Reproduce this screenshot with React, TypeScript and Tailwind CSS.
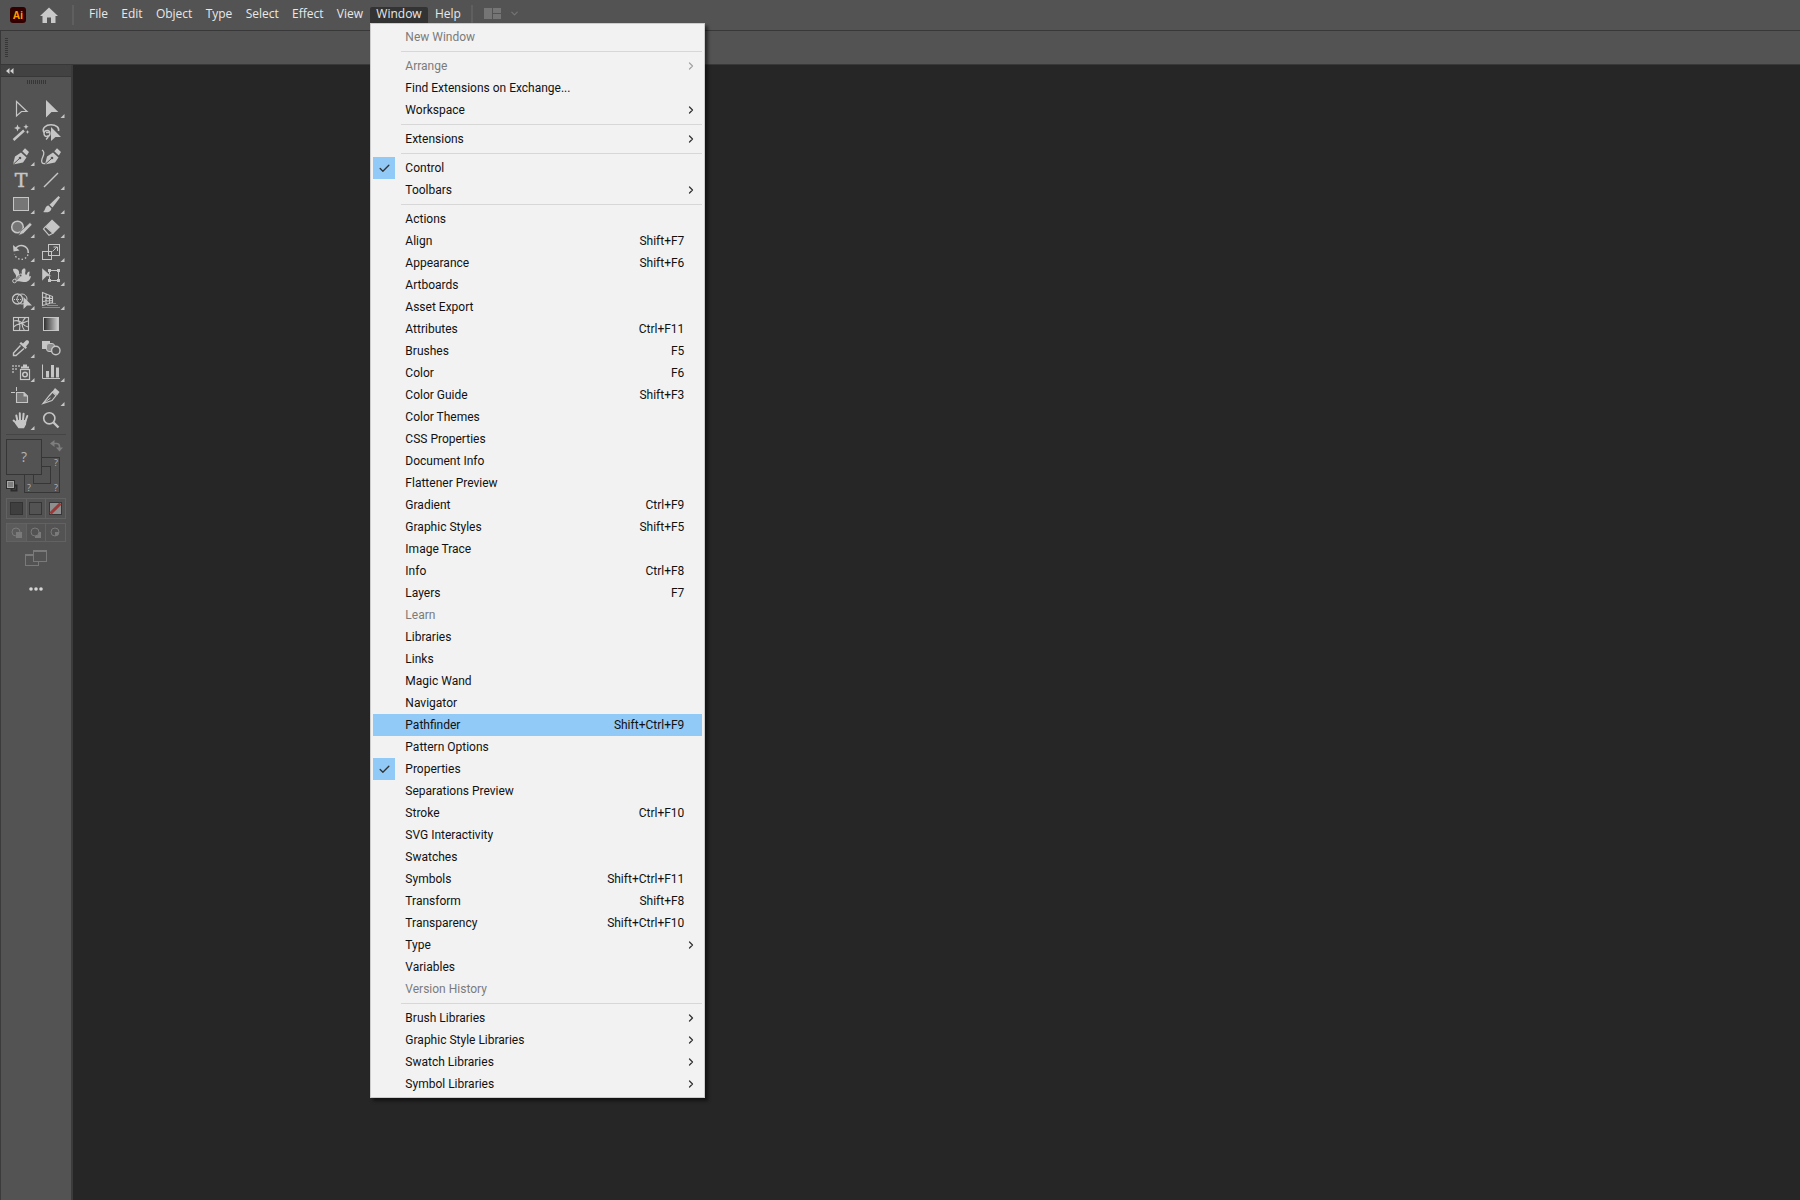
import { ReactNode, useState } from "react";
import { Check, ChevronDown, ChevronRight } from "lucide-react";
import clsx from "clsx";

interface MenuEntry {
  label: string;
  shortcut?: string;
  submenu?: boolean;
  disabled?: boolean;
  checked?: boolean;
}

interface Tool {
  name: string;
  icon: ReactNode;
  flyout?: boolean;
}

const MENUS = ["File", "Edit", "Object", "Type", "Select", "Effect", "View", "Window", "Help"];

const WINDOW_MENU: MenuEntry[][] = [
  [{ label: "New Window", disabled: true }],
  [
    { label: "Arrange", submenu: true, disabled: true },
    { label: "Find Extensions on Exchange..." },
    { label: "Workspace", submenu: true },
  ],
  [{ label: "Extensions", submenu: true }],
  [
    { label: "Control", checked: true },
    { label: "Toolbars", submenu: true },
  ],
  [
    { label: "Actions" },
    { label: "Align", shortcut: "Shift+F7" },
    { label: "Appearance", shortcut: "Shift+F6" },
    { label: "Artboards" },
    { label: "Asset Export" },
    { label: "Attributes", shortcut: "Ctrl+F11" },
    { label: "Brushes", shortcut: "F5" },
    { label: "Color", shortcut: "F6" },
    { label: "Color Guide", shortcut: "Shift+F3" },
    { label: "Color Themes" },
    { label: "CSS Properties" },
    { label: "Document Info" },
    { label: "Flattener Preview" },
    { label: "Gradient", shortcut: "Ctrl+F9" },
    { label: "Graphic Styles", shortcut: "Shift+F5" },
    { label: "Image Trace" },
    { label: "Info", shortcut: "Ctrl+F8" },
    { label: "Layers", shortcut: "F7" },
    { label: "Learn", disabled: true },
    { label: "Libraries" },
    { label: "Links" },
    { label: "Magic Wand" },
    { label: "Navigator" },
    { label: "Pathfinder", shortcut: "Shift+Ctrl+F9" },
    { label: "Pattern Options" },
    { label: "Properties", checked: true },
    { label: "Separations Preview" },
    { label: "Stroke", shortcut: "Ctrl+F10" },
    { label: "SVG Interactivity" },
    { label: "Swatches" },
    { label: "Symbols", shortcut: "Shift+Ctrl+F11" },
    { label: "Transform", shortcut: "Shift+F8" },
    { label: "Transparency", shortcut: "Shift+Ctrl+F10" },
    { label: "Type", submenu: true },
    { label: "Variables" },
    { label: "Version History", disabled: true },
  ],
  [
    { label: "Brush Libraries", submenu: true },
    { label: "Graphic Style Libraries", submenu: true },
    { label: "Swatch Libraries", submenu: true },
    { label: "Symbol Libraries", submenu: true },
  ],
];

const INK = "#c6c6c6";
const PANEL = "#535353";

const TOOLS: Tool[] = [
  {
    name: "Selection",
    icon: <path d="M10.5 5.5 21 15.5H15.5L10.5 20Z" fill="none" stroke={INK} strokeWidth="1.2" />,
  },
  { name: "Direct Selection", flyout: true, icon: <path d="M10 4 22.3 16H15.5L10 21.5Z" /> },
  {
    name: "Magic Wand",
    icon: (
      <>
        <path d="M7.5 20 18 10.5" stroke={INK} strokeWidth="2.4" />
        <path d="M11.5 4.5 12.5 7 15 8 12.5 9 11.5 11.5 10.5 9 8 8 10.5 7ZM20 4l.8 1.9 1.9.8-1.9.8-.8 2-.8-2-1.9-.8 1.9-.8ZM21.5 10l.6 1.4 1.4.6-1.4.6-.6 1.4-.6-1.4-1.4-.6 1.4-.6Z" />
      </>
    ),
  },
  {
    name: "Lasso",
    icon: (
      <>
        <path d="M8 12.5C5.5 8 10 4.8 15 4.8s8.5 2.5 7.5 6.2" fill="none" stroke={INK} strokeWidth="1.6" />
        <circle cx="11" cy="13.5" r="3" fill="none" stroke={INK} strokeWidth="1.4" />
        <path d="M10 12.5h4M12 15c.5 2-.5 3.5-2 4.5" fill="none" stroke={INK} strokeWidth="1.3" />
        <path d="M15 7 25 17H19.5L15 21Z" />
      </>
    ),
  },
  {
    name: "Pen",
    flyout: true,
    icon: (
      <>
        <path d="M7 20.5 9 12.5 15 8.5 20.5 13.5 17 18.5Z" />
        <path d="M16.3 7.2 19 4.2 23 8 20.8 11.5Z" />
        <path d="M7 20.5 13.5 14.5" stroke={PANEL} />
        <circle cx="14" cy="14" r="1.3" fill={PANEL} />
      </>
    ),
  },
  {
    name: "Curvature",
    icon: (
      <>
        <path d="M9 20.5 11 12.5 17 8.5 22.5 13.5 19 18.5Z" />
        <path d="M18.3 7.2 21 4.2 25 8 22.8 11.5Z" />
        <path d="M9 20.5 15.5 14.5" stroke={PANEL} />
        <circle cx="16" cy="14" r="1.3" fill={PANEL} />
        <path d="M6 6c4 2 1 6 0 9s0 5 3 4.5" fill="none" stroke={INK} strokeWidth="1.3" />
      </>
    ),
  },
  {
    name: "Type",
    flyout: true,
    icon: (
      <text x="15" y="19" fontSize="19" textAnchor="middle" fontFamily="'DejaVu Serif', serif" stroke={INK} strokeWidth="0.5">
        T
      </text>
    ),
  },
  { name: "Line Segment", flyout: true, icon: <path d="M8 19 22 5" stroke={INK} strokeWidth="1.5" /> },
  {
    name: "Rectangle",
    flyout: true,
    icon: <rect x="7.5" y="5.5" width="15" height="13" fill="#767676" stroke={INK} />,
  },
  {
    name: "Paintbrush",
    flyout: true,
    icon: (
      <>
        <path d="M22.5 4 24 5.5 16.5 15.5 13.5 12.7Z" />
        <path d="M12.5 13.5 15.5 16.5C15 20 11 21 7 20c2.5-1 1.8-6.5 5.5-6.5Z" />
      </>
    ),
  },
  {
    name: "Shaper",
    flyout: true,
    icon: (
      <>
        <circle cx="11.5" cy="11" r="5.8" fill="#767676" stroke={INK} strokeWidth="1.5" />
        <path d="M24 6.5 26 8.8 17.5 17.5 12.5 19.5 14.5 15.5Z" stroke={PANEL} strokeWidth="0.6" />
      </>
    ),
  },
  {
    name: "Eraser",
    flyout: true,
    icon: (
      <>
        <path d="M16 3.5 24 11 17.5 17.5 9.5 10Z" />
        <path d="M9.5 10.5 7.5 13 13 19.3 17 17.2Z" fill="none" stroke={INK} strokeWidth="1.2" />
      </>
    ),
  },
  {
    name: "Rotate",
    flyout: true,
    icon: (
      <>
        <path d="M9 9.5A7 7 0 0 1 22.3 13" fill="none" stroke={INK} strokeWidth="1.7" />
        <path d="M22 14.5A7 7 0 0 1 8.5 14" fill="none" stroke={INK} strokeWidth="1.3" strokeDasharray="1.5 2" />
        <path d="M7 5 7.5 11.5 13.5 10.5Z" />
      </>
    ),
  },
  {
    name: "Scale",
    flyout: true,
    icon: (
      <g fill="none" stroke={INK}>
        <rect x="12.5" y="4.5" width="11" height="11" />
        <rect x="6.5" y="11.5" width="9" height="8" />
        <path d="M16.5 11.5 21 7M17.5 7H21.5V11" />
      </g>
    ),
  },
  {
    name: "Width",
    flyout: true,
    icon: (
      <>
        <path d="M7 5c4-1 7 1.5 6 5l3-.5c-1-3 .5-5.500 3-5 1.500 3-1 4.500 1 6.500 1.500-.5 1-3.500 3.500-3.500.5 2-1 3.500 0 5l1.500-.5c-.5 4-3.500 6.500-7.500 6-3.500-.4-5-1-7.500-.5l-2-2c2.500-1.500 2.500-3.500 1.500-5S7 7.500 7 5Z" />
        <path d="M8.5 17 15 10.5" stroke={PANEL} strokeWidth="2" />
        <path d="M8.5 17 15 10.5" stroke={INK} />
        <circle cx="8.5" cy="17" r="1.8" fill={PANEL} stroke={INK} />
        <circle cx="14.5" cy="11.5" r="1.3" fill={PANEL} stroke={INK} strokeWidth="0.8" />
      </>
    ),
  },
  {
    name: "Free Transform",
    flyout: true,
    icon: (
      <>
        <rect x="13.5" y="6.5" width="9" height="10" fill="none" stroke={INK} />
        <path d="M12 5h3v3h-3ZM21 5h3v3h-3ZM12 15h3v3h-3ZM21 15h3v3h-3Z" />
        <path d="M6 4 15.5 12.3H10.5L6 17Z" stroke={PANEL} strokeWidth="0.4" />
      </>
    ),
  },
  {
    name: "Shape Builder",
    flyout: true,
    icon: (
      <>
        <circle cx="11.5" cy="11" r="5" fill="none" stroke={INK} strokeWidth="1.3" />
        <circle cx="16" cy="11" r="5" fill="none" stroke={INK} />
        <path d="M8 11.5h9" stroke={INK} strokeDasharray="1 1" />
        <path d="M17.5 9 26 17.5H21L17.5 21Z" />
      </>
    ),
  },
  {
    name: "Perspective Grid",
    flyout: true,
    icon: (
      <>
        <path
          d="M6.5 4.5 16.5 8.5V14.5L6.5 17.5ZM10 6v10.5M13.5 7.5v8M6.5 9l10 1.5M6.5 13.5l10-1"
          fill="none"
          stroke={INK}
          strokeWidth="1.1"
        />
        <path d="M14 15.5h6M11 17.5h11M6 19.5h18" stroke="#8c8c8c" />
      </>
    ),
  },
  {
    name: "Mesh",
    icon: (
      <g fill="none" stroke={INK} strokeWidth="1.1">
        <rect x="7.5" y="5.5" width="15" height="13" />
        <path d="M7.5 9c4-1 7 0 9.500 3s4 3 5.500 2.500M7.5 15c3-3 6-3 9-4s4-2 6-2M12.5 5.5c-1 4 3 6 1 13M19.5 5.5c-4 4-4 9-1 13" />
      </g>
    ),
  },
  {
    name: "Gradient",
    icon: (
      <>
        <defs>
          <linearGradient id="toolGradient">
            <stop offset="0" stopColor="#2b2b2b" />
            <stop offset="1" stopColor="#d4d4d4" />
          </linearGradient>
        </defs>
        <rect x="7.5" y="5.5" width="15" height="13" fill="url(#toolGradient)" stroke={INK} />
      </>
    ),
  },
  {
    name: "Eyedropper",
    flyout: true,
    icon: (
      <>
        <path d="M17 7.5 20 4.5c2-1 4 1 2.5 3L20 10.5l1 1-1.5 1.5-6-5.5 1.5-1.5Z" />
        <path d="M14.5 9.5 7.5 17v2.5H10L18 12.5" fill="none" stroke={INK} strokeWidth="1.4" />
      </>
    ),
  },
  {
    name: "Blend",
    icon: (
      <>
        <rect x="6" y="5" width="8" height="8" />
        <rect x="10.5" y="7.5" width="8" height="8" rx="2.5" fill="#8c8c8c" stroke={INK} />
        <circle cx="19.8" cy="14.5" r="4.2" fill={PANEL} stroke={INK} strokeWidth="1.4" />
      </>
    ),
  },
  {
    name: "Symbol Sprayer",
    flyout: true,
    icon: (
      <>
        <path d="M6 5h2v2H6ZM9 5h2v2H9ZM12 5h2v2h-2ZM6 8h2v2H6ZM9 8h2v2H9ZM6 11h2v2H6Z" fill="#9a9a9a" />
        <path d="M17 4.5h4v2h2v2h-8v-2h2Z" />
        <rect x="14.5" y="9.5" width="9" height="10" fill="none" stroke={INK} strokeWidth="1.2" />
        <circle cx="19" cy="14.5" r="2.3" fill="none" stroke={INK} strokeWidth="1.5" />
      </>
    ),
  },
  {
    name: "Column Graph",
    flyout: true,
    icon: (
      <>
        <path d="M6.5 4.5V18.5H24" fill="none" stroke={INK} />
        <path d="M10 11h3v6.5h-3ZM15 5h3v12.5h-3ZM20 7.5h3v10h-3Z" />
      </>
    ),
  },
  {
    name: "Artboard",
    icon: (
      <>
        <path d="M10.5 8.5H18L21.5 12V18.5H10.5Z" fill="#767676" stroke={INK} strokeWidth="1.1" />
        <path d="M5 8.5h4M10.5 3v4" stroke={INK} />
        <path d="M17.5 8.5 21.5 12.5H17.5Z" />
      </>
    ),
  },
  {
    name: "Slice",
    flyout: true,
    icon: (
      <>
        <path d="M19 4 23.5 8 21 11.5 16.5 7.5Z" />
        <path d="M16.5 8 20 11.5 16 16.5 7 19.5 13 12Z" fill="none" stroke={INK} strokeWidth="1.2" />
        <path d="M7 19.5 14.5 14" stroke={INK} />
      </>
    ),
  },
  {
    name: "Hand",
    flyout: true,
    icon: (
      <>
        <path
          d="M11.5 13 10.3 7.5M14 12 13.8 5.3M17 12 17.6 5.7M19.5 13 21.3 8M11.5 16 7.6 12.6"
          fill="none"
          stroke={INK}
          strokeWidth="2"
          strokeLinecap="round"
        />
        <path d="M10.5 12H20.5L20 16.5 18 20.2H12.5L9 15.5Z" />
      </>
    ),
  },
  {
    name: "Zoom",
    icon: (
      <>
        <circle cx="13.3" cy="10.3" r="5.6" fill="none" stroke={INK} strokeWidth="1.6" />
        <path d="M17.5 14.5 22.5 19.5" stroke={INK} strokeWidth="2.4" />
      </>
    ),
  },
];

function ToolButton({ tool }: { tool: Tool }) {
  return (
    <button type="button" aria-label={`${tool.name} Tool`} className="h-6 w-[30px] hover:bg-[#444444]">
      <svg viewBox="0 0 30 24" className="h-6 w-[30px]" fill={INK}>
        {tool.icon}
        {tool.flyout && <path d="M28.5 18V22H24.5Z" />}
      </svg>
    </button>
  );
}

function FillAndStroke() {
  return (
    <button type="button" aria-label="Fill and stroke" className="mt-1 h-[55px] w-[60px]">
      <svg viewBox="0 0 60 55" className="h-[55px] w-[60px]" fill={PANEL} stroke="#363636" fontFamily="'Open Sans', sans-serif">
        <rect x="18.5" y="18.5" width="35" height="35" />
        <rect x="27.5" y="27.5" width="17" height="17" />
        <rect x="0.5" y="0.5" width="35" height="35" />
        <g fill="#b4b4b4" stroke="none" textAnchor="middle" fontSize="9">
          <text x="18" y="23" fontSize="14">?</text>
          <text x="50" y="27">?</text>
          <text x="23" y="52">?</text>
          <text x="50" y="52">?</text>
        </g>
        <path d="M47 4.5h3.5q3 0 3 3V9" fill="none" stroke="#7e7e7e" strokeWidth="1.6" />
        <path d="M44 4.5 48.5 1v7ZM53.5 12.5 50 8.5h7Z" fill="#7e7e7e" stroke="none" />
        <rect x="5.5" y="46.5" width="5" height="5" fill="none" stroke="#2c2c2c" strokeWidth="2" />
        <rect x="1.5" y="42.5" width="6" height="6" fill="#7e7e7e" stroke="#a8a8a8" />
        <rect x="0.5" y="41.5" width="8" height="8" fill="none" stroke="#2c2c2c" />
      </svg>
    </button>
  );
}

function PaintModes() {
  return (
    <div className="mt-1 grid h-[21px] w-[60px] grid-cols-3 border border-[#626262]">
      <button type="button" aria-label="Color" className="flex items-center justify-center">
        <span className="size-[13px] border border-[#333333] bg-[#3f3f3f]" />
      </button>
      <button type="button" aria-label="Gradient" className="flex items-center justify-center border-x border-[#626262]">
        <span className="size-[13px] border border-[#363636]" />
      </button>
      <button type="button" aria-label="None" className="flex items-center justify-center">
        <svg viewBox="0 0 13 13" className="size-[13px]">
          <rect x="0.5" y="0.5" width="12" height="12" fill="#8f8f8f" stroke="#363636" />
          <path d="M1.5 11.5 11.5 1.5" stroke="#963a3a" strokeWidth="3" />
        </svg>
      </button>
    </div>
  );
}

function DrawingModes() {
  return (
    <div className="mt-1 grid h-[19px] w-[60px] grid-cols-3 border border-[#626262]">
      <button type="button" aria-label="Draw Normal" className="flex items-center justify-center bg-[#5b5b5b]">
        <svg viewBox="0 0 12 12" className="size-3" fill="none" stroke="#7a7a7a">
          <circle cx="5" cy="5" r="4" />
          <rect x="5" y="5" width="6" height="6" fill="#7a7a7a" stroke="none" />
        </svg>
      </button>
      <button type="button" aria-label="Draw Behind" className="flex items-center justify-center border-x border-[#626262]">
        <svg viewBox="0 0 12 12" className="size-3" stroke="#7a7a7a">
          <rect x="5" y="5" width="6" height="6" fill="#7a7a7a" stroke="none" />
          <circle cx="5" cy="5" r="4" fill={PANEL} />
        </svg>
      </button>
      <button type="button" aria-label="Draw Inside" className="flex items-center justify-center">
        <svg viewBox="0 0 12 12" className="size-3" fill="none" stroke="#7a7a7a">
          <circle cx="6" cy="5" r="4" />
          <path d="M6 5h4q0 4-4 4Z" fill="#7a7a7a" stroke="none" />
        </svg>
      </button>
    </div>
  );
}

function Toolbar() {
  return (
    <aside className="flex w-[73px] shrink-0 flex-col border-r-2 border-l border-[#3b3b3b] bg-[#535353]">
      <div className="flex h-3 items-center border-b border-[#383838] bg-[#424242] pl-[5px]">
        <button type="button" aria-label="Collapse toolbar">
          <svg viewBox="0 0 8 6" className="h-[6px] w-2" fill="#d0d0d0">
            <path d="M3.5 0V6L0 3ZM7.5 0V6L4 3Z" />
          </svg>
        </button>
      </div>
      <div className="flex h-[19px] justify-center pt-[3px]">
        <span className="h-1 w-[19px] bg-[repeating-linear-gradient(90deg,#363636_0_1px,transparent_1px_2px)]" />
      </div>
      <div className="flex flex-col pl-[5px]">
        <div className="grid w-[60px] grid-cols-2">
          {TOOLS.map((tool) => (
            <ToolButton key={tool.name} tool={tool} />
          ))}
        </div>
        <div className="mt-[2px] h-px w-[60px] bg-[#454545]" />
        <FillAndStroke />
        <PaintModes />
        <DrawingModes />
        <button type="button" aria-label="Change Screen Mode" className="mt-2 flex w-[60px] justify-center">
          <svg viewBox="0 0 22 16" className="h-4 w-[22px]" fill={PANEL} stroke="#7a7a7a">
            <rect x="0.5" y="4.5" width="13" height="11" />
            <path d="M0 5h14" strokeWidth="2" />
            <rect x="8.5" y="0.5" width="13" height="11" />
            <path d="M8 1h14" strokeWidth="2" />
          </svg>
        </button>
        <button type="button" aria-label="Edit Toolbar" className="mt-5 flex w-[60px] justify-center">
          <svg viewBox="0 0 14 6" className="h-[6px] w-[14px]" fill="#d6d6d6">
            <circle cx="2" cy="3" r="1.8" />
            <circle cx="7" cy="3" r="1.8" />
            <circle cx="12" cy="3" r="1.8" />
          </svg>
        </button>
      </div>
    </aside>
  );
}

interface MenuItemProps {
  entry: MenuEntry;
  active: boolean;
  onHover: () => void;
}

function MenuItem({ entry, active, onHover }: MenuItemProps) {
  return (
    <button
      type="button"
      role="menuitem"
      disabled={entry.disabled}
      onMouseEnter={onHover}
      className={clsx(
        "flex h-[22px] w-full items-center text-left",
        entry.disabled ? "text-[#7b7b7b]" : "text-[#111111]",
        active && "bg-[#91c9f7]"
      )}
    >
      <span className={clsx("flex size-[22px] items-center justify-center", entry.checked && "bg-[#91c9f7]")}>
        {entry.checked && <Check size={13} strokeWidth={2.5} className="text-[#333333]" />}
      </span>
      <span className="grow pl-[10px]">{entry.label}</span>
      {entry.shortcut && <span className="pr-[18px]">{entry.shortcut}</span>}
      {entry.submenu && (
        <ChevronRight
          size={12}
          strokeWidth={2.5}
          className={clsx("mr-[5px]", entry.disabled ? "text-[#a3a3a3]" : "text-[#333333]")}
        />
      )}
    </button>
  );
}

function WindowMenu() {
  const [active, setActive] = useState("Pathfinder");

  return (
    <div
      role="menu"
      aria-label="Window"
      className="absolute top-full left-0 z-10 w-[335px] border border-[#cccccc] bg-[#f2f2f2] p-[2px] font-[Roboto,sans-serif] text-[12px] leading-5 shadow-[3px_3px_3px_rgba(0,0,0,0.5)]"
    >
      {WINDOW_MENU.map((group, index) => (
        <div key={index}>
          {index > 0 && <hr className="my-[3px] ml-7 border-[#d7d7d7]" />}
          {group.map((entry) => (
            <MenuItem
              key={entry.label}
              entry={entry}
              active={entry.label === active}
              onHover={() => setActive(entry.label)}
            />
          ))}
        </div>
      ))}
    </div>
  );
}

function MenuBar() {
  return (
    <header className="flex h-[31px] items-start border-b border-[#383838] pt-[7px] pl-[10px]">
      <div className="flex size-4 items-center justify-center rounded-[3px] bg-[#330000] font-['Open_Sans',sans-serif] text-[10px] font-bold text-[#ff9a00]">
        Ai
      </div>
      <button type="button" aria-label="Home" className="ml-[14px]">
        <svg viewBox="0 0 18 16" className="h-4 w-[18px]" fill="#c9c9c9">
          <path d="M9 0.5 18 9H15.5V16H11V10.5H7V16H2.5V9H0Z" />
        </svg>
      </button>
      <div className="mt-[-2px] ml-[14px] h-5 w-[2px] bg-[#5f5f5f]" />
      <nav className="ml-[9px] flex w-[384px] justify-between">
        {MENUS.map((name) => (
          <div key={name} className="relative">
            <button
              type="button"
              className={clsx(
                "flex h-4 rounded-t-[2px] px-[6px] text-[12px] leading-[14px] text-[#e8e8e8]",
                name === "Window" && "bg-[#333333]"
              )}
            >
              {name}
            </button>
            {name === "Window" && <WindowMenu />}
          </div>
        ))}
      </nav>
      <div className="mt-[-2px] ml-1 h-[18px] w-[2px] bg-[#5f5f5f]" />
      <button type="button" aria-label="Arrange Documents" className="mt-px ml-[11px] flex items-center gap-2 text-[#757575]">
        <svg viewBox="0 0 17 11" className="h-[11px] w-[17px]" fill="currentColor">
          <path d="M0 0h8v11H0ZM9 0h8v5H9ZM9 6h8v5H9Z" />
        </svg>
        <ChevronDown size={11} strokeWidth={2.5} />
      </button>
    </header>
  );
}

export default function App() {
  return (
    <div className="flex min-h-screen flex-col bg-[#535353] font-['Open_Sans',sans-serif]">
      <MenuBar />
      <div className="flex h-[34px] border-b border-l border-[#383838] pt-[7px] pl-1">
        <span className="h-5 w-[3px] bg-[repeating-linear-gradient(#363636_0_1px,transparent_1px_2px)]" />
      </div>
      <div className="flex grow">
        <Toolbar />
        <main className="grow bg-[#262626]" />
      </div>
    </div>
  );
}
